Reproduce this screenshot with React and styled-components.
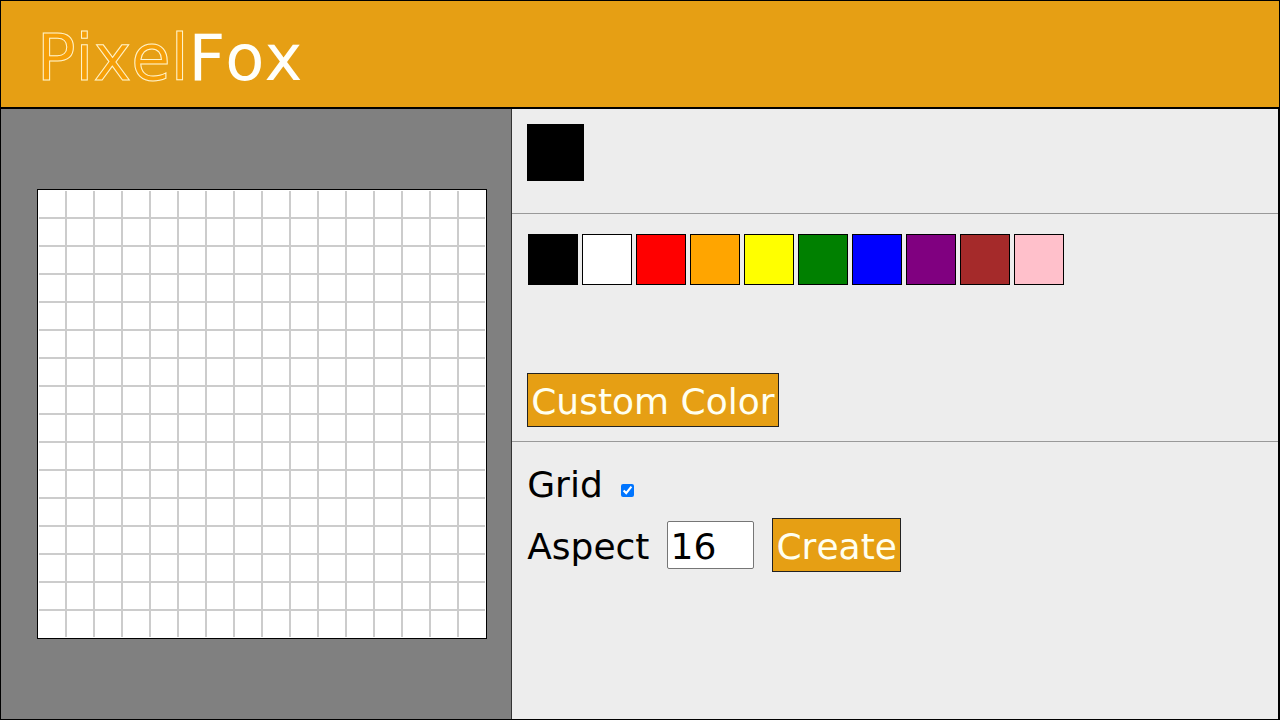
import React, { useState } from "react";
import styled, { createGlobalStyle } from "styled-components";

const COLORS = [
  "black",
  "white",
  "red",
  "orange",
  "yellow",
  "green",
  "blue",
  "purple",
  "brown",
  "pink",
];

const App = () => {
  const [color, setColor] = useState("black");
  const [showGrid, setShowGrid] = useState(true);
  const [aspect, setAspect] = useState(16);
  const [size, setSize] = useState(16);
  const [pixels, setPixels] = useState({});

  const paint = (index) => {
    setPixels({ ...pixels, [index]: color });
  };

  // Start over with an empty canvas
  const createCanvas = (e) => {
    e.preventDefault();
    setSize(Math.max(1, Number(aspect)));
    setPixels({});
  };

  const pickRandom = () => {
    const value = Math.floor(Math.random() * 0xffffff);
    setColor("#" + value.toString(16).padStart(6, "0"));
  };

  return (
    <>
      <GlobalStyle />
      <Page>
        <Header>
          <Logo>
            <span>Pixel</span>Fox
          </Logo>
        </Header>
        <Main>
          <CanvasPanel>
            <Canvas $size={size} $grid={showGrid}>
              {Array.from({ length: size * size }, (_, i) => (
                <Pixel key={i} $color={pixels[i]} onClick={() => paint(i)} />
              ))}
            </Canvas>
          </CanvasPanel>
          <Tools>
            <CurrentSection>
              <CurrentColor $color={color} />
            </CurrentSection>
            <PaletteSection>
              <Palette>
                {COLORS.map((c) => (
                  <Swatch
                    key={c}
                    type="button"
                    aria-label={c}
                    $color={c}
                    onClick={() => setColor(c)}
                  />
                ))}
              </Palette>
              <Button type="button" onClick={pickRandom}>
                Custom Color
              </Button>
            </PaletteSection>
            <Settings onSubmit={createCanvas}>
              <Row>
                <label htmlFor="grid">Grid</label>
                <Checkbox
                  id="grid"
                  type="checkbox"
                  checked={showGrid}
                  onChange={(e) => setShowGrid(e.target.checked)}
                />
              </Row>
              <Row>
                <label htmlFor="aspect">Aspect</label>
                <AspectInput
                  id="aspect"
                  type="number"
                  min="1"
                  max="64"
                  value={aspect}
                  onChange={(e) => setAspect(e.target.value)}
                />
                <Button type="submit">Create</Button>
              </Row>
            </Settings>
          </Tools>
        </Main>
      </Page>
    </>
  );
};

const GlobalStyle = createGlobalStyle`
  * {
    box-sizing: border-box;
  }

  body {
    margin: 0;
    font-family: Verdana, "DejaVu Sans", sans-serif;
    font-size: 36px;
    font-kerning: none;
    color: #000;
  }
`;

const Page = styled.div`
  display: flex;
  flex-direction: column;
  min-height: 100vh;
  border: 1px solid #000;
`;

const Header = styled.header`
  display: flex;
  align-items: center;
  padding: 20px 36px 12px;
  background-color: #e69f14;
  border-bottom: 2px solid #000;
`;

const Logo = styled.h1`
  margin: 0;
  font-size: 64px;
  font-weight: normal;
  line-height: 74px;
  color: #fffffa;

  span {
    color: #f59f08;
    -webkit-text-stroke: 1px #fff4cc;
  }
`;

const Main = styled.main`
  flex: 1;
  display: grid;
  grid-template-columns: 2fr 3fr;
`;

const CanvasPanel = styled.section`
  display: flex;
  align-items: center;
  padding: 24px 24px 24px 36px;
  background-color: #808080;
  border-right: 1px solid #333;
`;

const Canvas = styled.div`
  display: grid;
  grid-template-columns: repeat(${({ $size }) => $size}, 1fr);
  gap: ${({ $grid }) => ($grid ? "2px" : "0")};
  width: 100%;
  aspect-ratio: 1;
  padding: 1px;
  border: 1px solid #000;
  background: linear-gradient(#ccc, #ccc) content-box, #fff;
`;

const Pixel = styled.div`
  background-color: ${({ $color }) => $color || "#fff"};
`;

const Tools = styled.section`
  display: flex;
  flex-direction: column;
  background-color: #ededed;
  border-right: 1px solid #000;
`;

const CurrentSection = styled.div`
  padding: 15px 15px 32px;
  border-bottom: 1px solid #999;
`;

const CurrentColor = styled.div`
  width: 57px;
  height: 57px;
  background-color: ${({ $color }) => $color};
`;

const PaletteSection = styled.div`
  display: flex;
  flex-direction: column;
  align-items: flex-start;
  gap: 88px;
  padding: 20px 15px 14px;
  border-bottom: 1px solid #999;
`;

const Palette = styled.div`
  display: flex;
  flex-wrap: wrap;
  gap: 4px;
  padding: 0 1px;
`;

const Swatch = styled.button`
  width: 50px;
  height: 51px;
  padding: 0;
  border: 1px solid #000;
  background-color: ${({ $color }) => $color};
  cursor: pointer;
`;

const Button = styled.button`
  padding: 7px 3px 3px;
  border: 1px solid #222;
  background-color: #e69f14;
  color: #fffff0;
  font-family: inherit;
  font-size: 36px;
  font-kerning: inherit;
  line-height: 42px;
  cursor: pointer;
`;

const Settings = styled.form`
  display: flex;
  flex-direction: column;
  gap: 13px;
  padding: 22px 15px;
`;

const Row = styled.div`
  display: flex;
  align-items: baseline;
  gap: 18px;
`;

const Checkbox = styled.input`
  width: 13px;
  height: 13px;
  margin: 0;
`;

const AspectInput = styled.input`
  width: 87px;
  height: 48px;
  padding: 4px 2px 0;
  border: 1px solid #767676;
  border-radius: 2px;
  background-color: #fff;
  color: #000;
  font-family: inherit;
  font-size: 36px;
`;

export default App;
